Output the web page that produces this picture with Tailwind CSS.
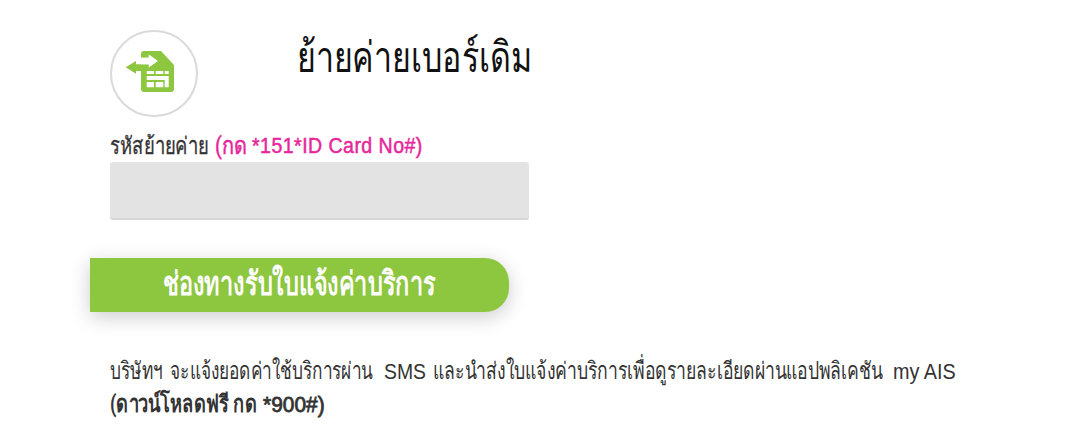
<!DOCTYPE html>
<html lang="th">
<head>
  <meta charset="UTF-8" />
  <meta name="viewport" content="width=device-width, initial-scale=1.0"/>
  <title>ย้ายค่ายเบอร์เดิม</title>
  <script src="https://cdn.jsdelivr.net/npm/@tailwindcss/browser@4"></script>
</head>

<body class="bg-white text-[#333] overflow-hidden font-['Roboto','Noto_Sans',sans-serif]">

  <main class="pl-[110px] pt-[30px]">
    <header class="flex">
      <div class="w-[88px] h-[87px] rounded-full border-2 border-[#dadada]">
        <svg class="w-[84px] h-[83px]" viewBox="112 32 84 83">
          <path fill="#8dc63f" d="M144 51h17l13 14v24q0 3-3 3h-27q-3 0-3-3V71h-5v2.700L125.700 67.300L136 61v3.300h13V67l8.700-6l-8.700-6.300V57.700H141V54q0-3 3-3z"/>
          <path fill="#fff" d="M141 57.700h7.700v-3.200l9 6.500l-9 6.500v-3.300H141zM146.700 71h7.300v3h-7.300zM155.700 71h7.600v3h-7.600zM164.700 71h4v3h-4zM146.700 76h22v11.300h-4V80h-18zM146.700 82h7.300v5.300h-7.300zM155.700 82h7.600v5.300h-7.600z"/>
        </svg>
      </div>
      <h1 class="ml-[99px] w-[233px] h-[54px] text-[43px] leading-[54px] whitespace-nowrap text-[#111] origin-left scale-x-[.748]">ย้ายค่ายเบอร์เดิม</h1>
    </header>

    <section>
      <label for="code" class="flex mt-[13px] h-[32px] text-[24px] leading-[32px] whitespace-nowrap">
        <span class="w-[105px] origin-left scale-x-[.768] [-webkit-text-stroke:0.3px]">รหัสย้ายค่าย</span>
        <span class="w-[37px] text-[#e6269b] origin-left scale-x-[.83] [-webkit-text-stroke:0.5px]">(กด</span>
        <span class="font-['Liberation_Sans',sans-serif] text-[22px] tracking-[0.5px] text-[#e6269b] origin-left scale-x-[.89] [-webkit-text-stroke:0.5px]">*151*ID Card No#)</span>
      </label>
      <input type="text" id="code" class="block w-[419px] h-[58px] px-3 rounded-[3px] bg-[#e3e3e3] border-b-2 border-[#d6d6d6]">
    </section>

    <h2 class="-ml-5 mt-[38px] w-[419px] h-[54px] rounded-r-[24px] bg-[#8dc63f] shadow-[0_5px_20px_rgba(0,0,0,0.2)]">
      <span class="block ml-[73px] w-[272px] text-[33px] leading-[51px] font-bold whitespace-nowrap text-white origin-left scale-x-[.711]">ช่องทางรับใบแจ้งค่าบริการ</span>
    </h2>

    <section class="mt-[43px] text-[24px] leading-[33px] whitespace-nowrap">
      <p class="flex">
        <span class="w-[274px] [word-spacing:5px] origin-left scale-x-[.719]">บริษัทฯ จะแจ้งยอดค่าใช้บริการผ่าน</span>
        <span class="w-[49px] font-['Liberation_Sans',sans-serif] text-[22px] origin-left scale-x-[.88]">SMS</span>
        <span class="w-[460px] origin-left scale-x-[.733]">และนำส่งใบแจ้งค่าบริการเพื่อดูรายละเอียดผ่านแอปพลิเคชัน</span>
        <span class="font-['Liberation_Sans',sans-serif] text-[22px] origin-left scale-x-[.9]">my AIS</span>
      </p>
      <p class="flex font-bold">
        <span class="w-[153px] origin-left scale-x-[.76]">(ดาวน์โหลดฟรี กด</span>
        <span class="font-['Liberation_Sans',sans-serif] text-[22px] font-normal origin-left scale-x-[.95] [-webkit-text-stroke:0.8px]">*900#)</span>
      </p>
    </section>
  </main>

</body>
</html>
